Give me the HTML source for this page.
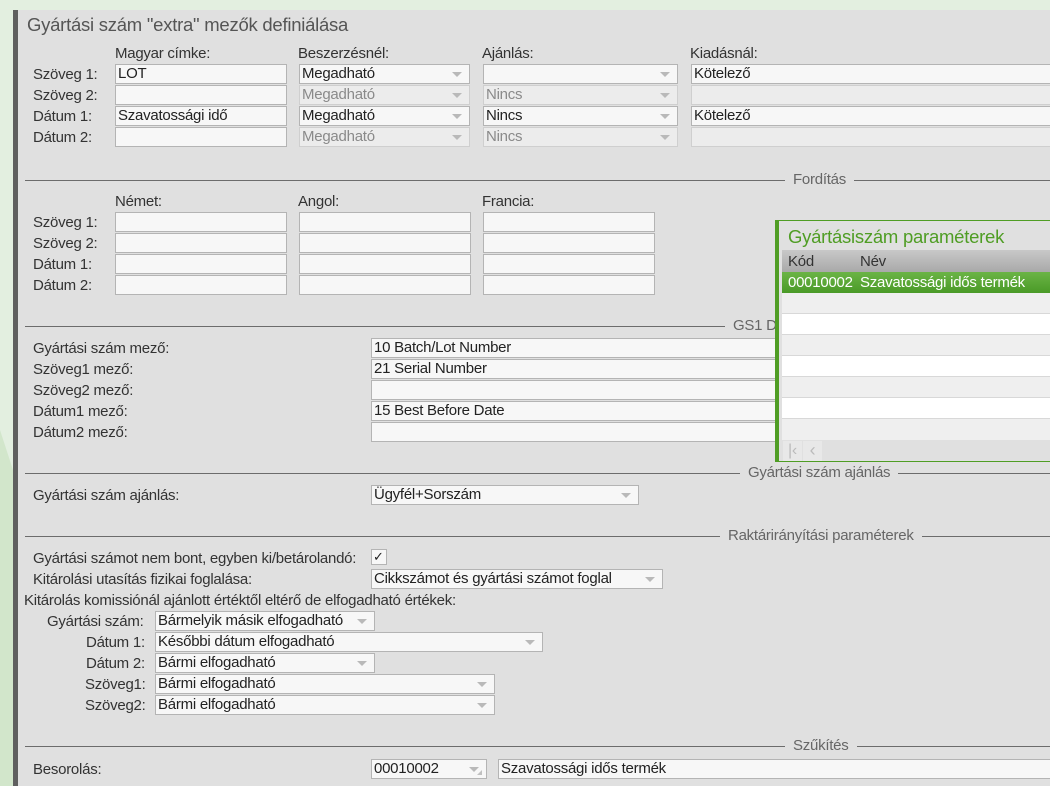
<!DOCTYPE html>
<html><head><meta charset="utf-8"><style>
*{margin:0;padding:0;box-sizing:border-box}
body{width:1050px;height:786px;overflow:hidden;background:#e3efe0;font-family:"Liberation Sans",Arial,sans-serif;font-size:15px;color:#333;position:relative;letter-spacing:-0.25px}
.deco{position:absolute;left:0;top:0;width:1050px;height:786px}
.panel{position:absolute;left:13px;top:10px;width:1037px;height:776px;background:#e0e0e0;border-left:5px solid #5f5f5f}
.a{position:absolute;white-space:nowrap;line-height:19px}
.in{position:absolute;height:20px;background:#f7f7f7;border:1px solid #b4b4b4;line-height:18px;padding-left:2px;white-space:nowrap;overflow:hidden;color:#222}
.dis{background:#ececec;border-color:#cfcfcf;color:#8a8a8a}
.sel::after{content:"";position:absolute;right:7px;top:7px;border-left:5px solid transparent;border-right:5px solid transparent;border-top:5px solid #b9b9b9}
.hr{position:absolute;left:25px;right:0;height:1px;background:#6c6c6c}
.ht{position:absolute;background:#e0e0e0;padding:0 8px;color:#666;line-height:16px}
.pop{position:absolute;left:775px;top:220px;width:275px;height:242px;background:#e0e0e0;border-left:4px solid #4f9d24;border-top:1px solid #4f9d24;border-bottom:1px solid #4f9d24}
.row{position:absolute;left:3px;right:0;height:21px;border-bottom:1px solid #d8d8d8}
</style></head><body>
<svg class="deco" viewBox="0 0 1050 786"><path d="M0 430 L13 470 L13 786 L0 786Z" fill="#d2e6cb"/><path d="M13 700 L160 786 L13 786Z" fill="#cfe5c6"/></svg>
<div class="panel"></div>
<div class="a" style="left:27px;top:14px;font-size:18.5px;color:#555;line-height:22px">Gyártási szám "extra" mezők definiálása</div>

<div class="a" style="left:115px;top:44px">Magyar címke:</div>
<div class="a" style="left:298px;top:44px">Beszerzésnél:</div>
<div class="a" style="left:482px;top:44px">Ajánlás:</div>
<div class="a" style="left:690px;top:44px">Kiadásnál:</div>

<div class="a" style="left:33px;top:65px">Szöveg 1:</div>
<div class="a" style="left:33px;top:86px">Szöveg 2:</div>
<div class="a" style="left:33px;top:107px">Dátum 1:</div>
<div class="a" style="left:33px;top:128px">Dátum 2:</div>

<div class="in" style="left:115px;top:64px;width:172px">LOT</div>
<div class="in" style="left:115px;top:85px;width:172px"></div>
<div class="in" style="left:115px;top:106px;width:172px">Szavatossági idő</div>
<div class="in" style="left:115px;top:127px;width:172px"></div>

<div class="in sel" style="left:299px;top:64px;width:171px">Megadható</div>
<div class="in sel dis" style="left:299px;top:85px;width:171px">Megadható</div>
<div class="in sel" style="left:299px;top:106px;width:171px">Megadható</div>
<div class="in sel dis" style="left:299px;top:127px;width:171px">Megadható</div>

<div class="in sel" style="left:483px;top:64px;width:195px"></div>
<div class="in sel dis" style="left:483px;top:85px;width:195px">Nincs</div>
<div class="in sel" style="left:483px;top:106px;width:195px">Nincs</div>
<div class="in sel dis" style="left:483px;top:127px;width:195px">Nincs</div>

<div class="in" style="left:691px;top:64px;width:370px">Kötelező</div>
<div class="in dis" style="left:691px;top:85px;width:370px"></div>
<div class="in" style="left:691px;top:106px;width:370px">Kötelező</div>
<div class="in dis" style="left:691px;top:127px;width:370px"></div>

<div class="hr" style="top:180px"></div><div class="ht" style="left:785px;top:172px">Fordítás</div>
<div class="a" style="left:115px;top:192px">Német:</div>
<div class="a" style="left:298px;top:192px">Angol:</div>
<div class="a" style="left:482px;top:192px">Francia:</div>
<div class="a" style="left:33px;top:213px">Szöveg 1:</div>
<div class="a" style="left:33px;top:234px">Szöveg 2:</div>
<div class="a" style="left:33px;top:255px">Dátum 1:</div>
<div class="a" style="left:33px;top:276px">Dátum 2:</div>
<div class="in" style="left:115px;top:212px;width:172px"></div><div class="in" style="left:299px;top:212px;width:172px"></div><div class="in" style="left:483px;top:212px;width:172px"></div>
<div class="in" style="left:115px;top:233px;width:172px"></div><div class="in" style="left:299px;top:233px;width:172px"></div><div class="in" style="left:483px;top:233px;width:172px"></div>
<div class="in" style="left:115px;top:254px;width:172px"></div><div class="in" style="left:299px;top:254px;width:172px"></div><div class="in" style="left:483px;top:254px;width:172px"></div>
<div class="in" style="left:115px;top:275px;width:172px"></div><div class="in" style="left:299px;top:275px;width:172px"></div><div class="in" style="left:483px;top:275px;width:172px"></div>

<div class="hr" style="top:326px"></div><div class="ht" style="left:725px;top:318px">GS1 Data</div>
<div class="a" style="left:33px;top:339px">Gyártási szám mező:</div>
<div class="a" style="left:33px;top:360px">Szöveg1 mező:</div>
<div class="a" style="left:33px;top:381px">Szöveg2 mező:</div>
<div class="a" style="left:33px;top:402px">Dátum1 mező:</div>
<div class="a" style="left:33px;top:423px">Dátum2 mező:</div>
<div class="in" style="left:371px;top:338px;width:420px">10 Batch/Lot Number</div>
<div class="in" style="left:371px;top:359px;width:420px">21 Serial Number</div>
<div class="in" style="left:371px;top:380px;width:420px"></div>
<div class="in" style="left:371px;top:401px;width:420px">15 Best Before Date</div>
<div class="in" style="left:371px;top:422px;width:420px"></div>

<div class="hr" style="top:473px"></div><div class="ht" style="left:740px;top:465px">Gyártási szám ajánlás</div>
<div class="a" style="left:33px;top:486px">Gyártási szám ajánlás:</div>
<div class="in sel" style="left:371px;top:485px;width:268px">Ügyfél+Sorszám</div>

<div class="hr" style="top:536px"></div><div class="ht" style="left:720px;top:528px">Raktárirányítási paraméterek</div>
<div class="a" style="left:33px;top:549px">Gyártási számot nem bont, egyben ki/betárolandó:</div>
<div class="in" style="left:371px;top:549px;width:16px;height:16px;line-height:14px;font-size:13px;padding-left:1px">✓</div>
<div class="a" style="left:33px;top:570px">Kitárolási utasítás fizikai foglalása:</div>
<div class="in sel" style="left:371px;top:569px;width:292px">Cikkszámot és gyártási számot foglal</div>
<div class="a" style="left:24px;top:591px">Kitárolás komissiónál ajánlott értéktől eltérő de elfogadható értékek:</div>
<div class="a" style="left:47px;top:612px">Gyártási szám:</div>
<div class="a" style="left:86px;top:633px">Dátum 1:</div>
<div class="a" style="left:86px;top:654px">Dátum 2:</div>
<div class="a" style="left:85px;top:675px">Szöveg1:</div>
<div class="a" style="left:85px;top:696px">Szöveg2:</div>
<div class="in sel" style="left:155px;top:611px;width:220px">Bármelyik másik elfogadható</div>
<div class="in sel" style="left:155px;top:632px;width:388px">Későbbi dátum elfogadható</div>
<div class="in sel" style="left:155px;top:653px;width:220px">Bármi elfogadható</div>
<div class="in sel" style="left:155px;top:674px;width:340px">Bármi elfogadható</div>
<div class="in sel" style="left:155px;top:695px;width:340px">Bármi elfogadható</div>

<div class="hr" style="top:746px"></div><div class="ht" style="left:785px;top:738px">Szűkítés</div>
<div class="a" style="left:33px;top:760px">Besorolás:</div>
<div class="in sel" style="left:371px;top:759px;width:116px;padding-right:0">00010002<span style="position:absolute;right:4px;top:10px;width:0;height:0;border-left:5px solid transparent;border-bottom:5px solid #c0c0c0"></span></div>
<div class="in" style="left:498px;top:759px;width:560px">Szavatossági idős termék</div>

<div class="pop">
<div class="a" style="left:9px;top:5px;font-size:18.5px;color:#4f9d24;line-height:22px">Gyártásiszám paraméterek</div>
<div class="row" style="top:29px;height:22px;background:linear-gradient(#c8c8c8,#a9a9a9);border:0"><span class="a" style="left:6px;top:2px;color:#333">Kód</span><span class="a" style="left:78px;top:2px;color:#333">Név</span></div>
<div class="row" style="top:51px;background:linear-gradient(#6bb446,#4a9a27);border:0"><span class="a" style="left:6px;top:1px;color:#fff">00010002</span><span class="a" style="left:78px;top:1px;color:#fff">Szavatossági idős termék</span></div>
<div class="row" style="top:72px;background:#efefef"></div>
<div class="row" style="top:93px;background:#fff"></div>
<div class="row" style="top:114px;background:#efefef"></div>
<div class="row" style="top:135px;background:#fff"></div>
<div class="row" style="top:156px;background:#efefef"></div>
<div class="row" style="top:177px;background:#fff"></div>
<div class="row" style="top:198px;background:#efefef;border:0"></div>
<div style="position:absolute;left:4px;top:220px;width:19px;height:20px;background:#e8e8e8;color:#bbb;font-size:16px;line-height:20px;text-align:center">|‹</div>
<div style="position:absolute;left:24px;top:220px;width:19px;height:20px;background:#e8e8e8;color:#bbb;font-size:18px;line-height:19px;text-align:center">‹</div>
</div>
</body></html>
